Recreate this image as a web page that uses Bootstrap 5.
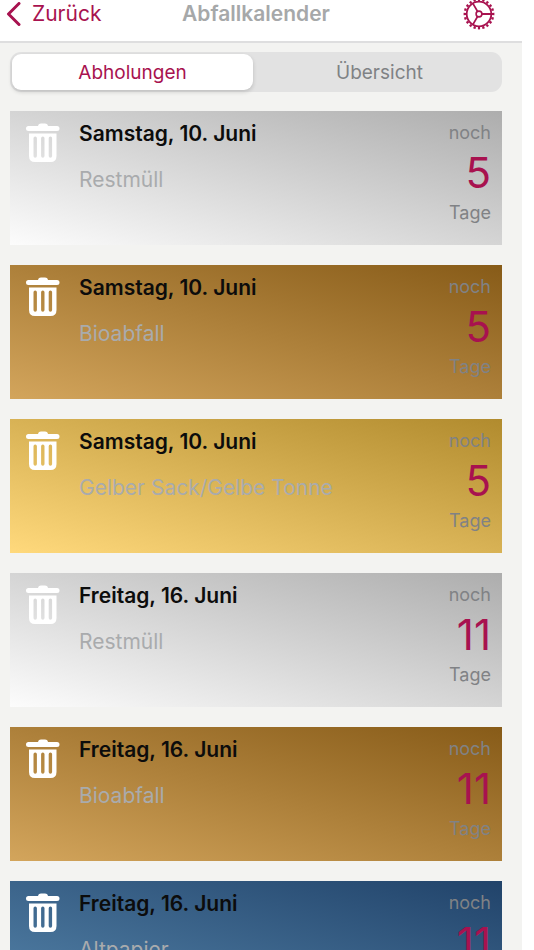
<!DOCTYPE html>
<html lang="de">
<head>
<meta charset="utf-8">
<meta name="viewport" content="width=device-width, initial-scale=1">
<title>Abfallkalender</title>
<link rel="stylesheet" href="https://cdn.jsdelivr.net/npm/bootstrap@5.3.0/dist/css/bootstrap.min.css">
<style>
:root { --brand: #a8124f; }
body { font-family: Inter, "Liberation Sans", sans-serif; background: #fff; padding-right: 12px; }
.app { background: #f3f3f1; }
.topbar { border-bottom: 2px solid #dededf; padding: 0 16px 13px 6px; height: 43px; }
.topbar .side { flex: 1 1 0; }
.back-link, .settings-btn { color: var(--brand); }
.settings-btn { margin-right: 11px; }
.back-link { font-size: 21px; line-height: 28px; gap: 11px; }
.page-title { font-size: 21px; line-height: 28px; font-weight: 600; color: #a6a8a9; }
.content { padding: 9px 20px 0 10px; }
.segments { background: #e2e2e2; border-radius: 11px; padding: 2px; gap: 6px; height: 40px; margin-bottom: 19px; }
.segments .seg { flex: 1 1 0; border: 0; border-radius: 9px; background: none; color: #808285; font-size: 19px; line-height: 36px; padding: 1px 0 0; }
.segments .seg.active { background: #fff; color: var(--brand); box-shadow: 0 2px 4px rgba(0,0,0,.16); }
.pickups { gap: 20px; }
.pickup { height: 134px; flex: none; padding: 8px 11px 0 16px; background: linear-gradient(to top right, var(--from), var(--to)); }
.restmuell { --from: #fcfcfc; --to: #adadad; }
.bio { --from: #d3a55c; --to: #875b18; }
.gelb { --from: #ffd97c; --to: #b18b2e; }
.papier { --from: #5685ab; --to: #21436a; }
.bin { width: 34px; height: 40px; margin: 4px 19px 0 0; }
.date { font-size: 21px; line-height: 30px; font-weight: 600; color: #0c0c0c; }
.kind { font-size: 21px; line-height: 30px; color: #a9abad; margin-top: 16px; }
.unit { font-size: 18px; line-height: 28px; color: #808285; }
.days { font-size: 42px; line-height: 52px; color: var(--brand); }
</style>
</head>
<body>
<svg class="d-none" aria-hidden="true">
  <symbol id="bin" viewBox="0 0 34 40">
    <path fill="currentColor" fill-rule="evenodd" d="M2.500 3H12C12.500 1.200 13.500.500 15 .500H19C20.500.500 21.500 1.200 22 3H31A2.500 2.500 0 0 1 31 8H2.500A2.500 2.500 0 0 1 2.500 3ZM3 10.500H30.500V33Q30.500 39 24.500 39H9Q3 39 3 33ZM9.200 13.500Q7.500 13.500 7.500 15.200V33Q7.500 34.700 9.200 34.700T10.900 33V15.200Q10.900 13.500 9.200 13.500ZM16.800 13.500Q15.100 13.500 15.100 15.200V33Q15.100 34.700 16.800 34.700T18.500 33V15.200Q18.500 13.500 16.800 13.500ZM24.400 13.500Q22.700 13.500 22.700 15.200V33Q22.700 34.700 24.400 34.700T26.100 33V15.200Q26.100 13.500 24.400 13.500Z"/>
  </symbol>
</svg>
<div class="app d-flex flex-column vh-100 overflow-hidden">
  <header class="topbar d-flex align-items-center bg-white flex-shrink-0">
    <div class="side d-flex">
      <a href="#" class="back-link d-flex align-items-center text-decoration-none">
        <svg width="15" height="24" viewBox="0 0 15 24" fill="none" stroke="currentColor" stroke-width="3" stroke-linecap="round" stroke-linejoin="round" aria-hidden="true"><path d="M13 1.500L2.500 12L13 22.500"/></svg>
        <span>Zurück</span>
      </a>
    </div>
    <h1 class="page-title mb-0">Abfallkalender</h1>
    <div class="side d-flex justify-content-end">
      <button type="button" class="settings-btn btn p-0 border-0 d-flex" aria-label="Einstellungen">
        <svg width="32" height="32" viewBox="-16 -16 32 32" fill="none" stroke="currentColor" aria-hidden="true">
          <circle r="12.300" stroke-width="1.800"/>
          <circle r="14.200" stroke-width="2.400" pathLength="80" stroke-dasharray="2 2" stroke-dashoffset="1"/>
          <circle r="2.900" stroke-width="1.600"/>
          <path stroke-width="1.800" d="M3 0H12M-1.500-2.600L-6-10.400M-1.500 2.600L-6 10.400"/>
        </svg>
      </button>
    </div>
  </header>
  <main class="content d-flex flex-column flex-grow-1 overflow-hidden">
    <div class="segments d-flex flex-shrink-0" role="group" aria-label="Ansicht">
      <button type="button" class="seg active" aria-pressed="true">Abholungen</button>
      <button type="button" class="seg" aria-pressed="false">Übersicht</button>
    </div>
    <ul class="pickups list-unstyled d-flex flex-column mb-0">
      <li class="pickup restmuell d-flex">
        <svg class="bin text-white flex-shrink-0" aria-hidden="true"><use href="#bin"/></svg>
        <div class="flex-grow-1"><div class="date">Samstag, 10. Juni</div><div class="kind">Restmüll</div></div>
        <div class="text-end"><div class="unit">noch</div><div class="days">5</div><div class="unit">Tage</div></div>
      </li>
      <li class="pickup bio d-flex">
        <svg class="bin text-white flex-shrink-0" aria-hidden="true"><use href="#bin"/></svg>
        <div class="flex-grow-1"><div class="date">Samstag, 10. Juni</div><div class="kind">Bioabfall</div></div>
        <div class="text-end"><div class="unit">noch</div><div class="days">5</div><div class="unit">Tage</div></div>
      </li>
      <li class="pickup gelb d-flex">
        <svg class="bin text-white flex-shrink-0" aria-hidden="true"><use href="#bin"/></svg>
        <div class="flex-grow-1"><div class="date">Samstag, 10. Juni</div><div class="kind">Gelber Sack/Gelbe Tonne</div></div>
        <div class="text-end"><div class="unit">noch</div><div class="days">5</div><div class="unit">Tage</div></div>
      </li>
      <li class="pickup restmuell d-flex">
        <svg class="bin text-white flex-shrink-0" aria-hidden="true"><use href="#bin"/></svg>
        <div class="flex-grow-1"><div class="date">Freitag, 16. Juni</div><div class="kind">Restmüll</div></div>
        <div class="text-end"><div class="unit">noch</div><div class="days">11</div><div class="unit">Tage</div></div>
      </li>
      <li class="pickup bio d-flex">
        <svg class="bin text-white flex-shrink-0" aria-hidden="true"><use href="#bin"/></svg>
        <div class="flex-grow-1"><div class="date">Freitag, 16. Juni</div><div class="kind">Bioabfall</div></div>
        <div class="text-end"><div class="unit">noch</div><div class="days">11</div><div class="unit">Tage</div></div>
      </li>
      <li class="pickup papier d-flex">
        <svg class="bin text-white flex-shrink-0" aria-hidden="true"><use href="#bin"/></svg>
        <div class="flex-grow-1"><div class="date">Freitag, 16. Juni</div><div class="kind">Altpapier</div></div>
        <div class="text-end"><div class="unit">noch</div><div class="days">11</div><div class="unit">Tage</div></div>
      </li>
    </ul>
  </main>
</div>
<script src="https://cdn.jsdelivr.net/npm/bootstrap@5.3.0/dist/js/bootstrap.bundle.min.js"></script>
</body>
</html>
